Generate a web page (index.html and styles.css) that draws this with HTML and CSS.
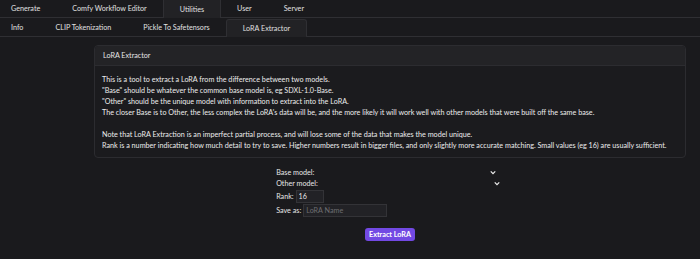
FILE: index.html
```html
<!DOCTYPE html>
<html lang="en">
<head>
<meta charset="utf-8">
<title>LoRA Extractor</title>
<link rel="stylesheet" href="styles.css">
</head>
<body>
<nav class="tabs tabs-main">
  <a class="tab">Generate</a>
  <a class="tab">Comfy Workflow Editor</a>
  <a class="tab active">Utilities</a>
  <a class="tab">User</a>
  <a class="tab">Server</a>
</nav>
<nav class="tabs tabs-sub">
  <a class="tab">Info</a>
  <a class="tab">CLIP Tokenization</a>
  <a class="tab">Pickle To Safetensors</a>
  <a class="tab active">LoRA Extractor</a>
</nav>
<main class="content">
  <section class="card">
    <div class="card-header">LoRA Extractor</div>
    <div class="card-body">
      This is a tool to extract a LoRA from the difference between two models.<br>
      "Base" should be whatever the common base model is, eg SDXL-1.0-Base.<br>
      "Other" should be the unique model with information to extract into the LoRA.<br>
      The closer Base is to Other, the less complex the LoRA's data will be, and the more likely it will work well with other models that were built off the same base.<br>
      <br>
      Note that LoRA Extraction is an imperfect partial process, and will lose some of the data that makes the model unique.<br>
      Rank is a number indicating how much detail to try to save. Higher numbers result in bigger files, and only slightly more accurate matching. Small values (eg 16) are usually sufficient.
    </div>
  </section>
  <div class="form-wrap">
    <div class="form">
      <div class="row"><span class="label">Base model:</span><span class="select"><svg viewBox="0 0 8 6" width="6" height="5"><path d="M1 1.5 L4 4.5 L7 1.5" fill="none" stroke="#eee" stroke-width="1.6"/></svg></span></div>
      <div class="row"><span class="label">Other model:</span><span class="select"><svg viewBox="0 0 8 6" width="6" height="5"><path d="M1 1.5 L4 4.5 L7 1.5" fill="none" stroke="#eee" stroke-width="1.6"/></svg></span></div>
      <div class="row row-input"><span class="label">Rank:</span><input class="input input-rank" type="text" value="16"></div>
      <div class="row row-input"><span class="label">Save as:</span><input class="input input-name" type="text" placeholder="LoRA Name"></div>
    </div>
    <button class="btn">Extract LoRA</button>
  </div>
</main>
</body>
</html>
```
FILE: styles.css
```css
* { box-sizing: border-box; }
html, body { margin: 0; padding: 0; }
body {
  background: #1a1a1d;
  color: #e6e6e6;
  font-family: Lato, "Liberation Sans", Arial, sans-serif;
  font-size: 7.2px;
  width: 700px;
  height: 259px;
  overflow: hidden;
}
.tabs {
  display: flex;
  align-items: stretch;
  border-bottom: 1px solid #2f2f33;
}
.tabs-main { height: 18px; }
.tabs-sub { height: 19px; padding-top: 1px; }
.tab {
  display: flex;
  align-items: center;
  padding: 0 16px;
  color: #e0e0e0;
  white-space: nowrap;
}
.tab:first-child { padding-left: 11px; }
.tab.active {
  background: #222225;
  border: 1px solid #2f2f33;
  border-bottom: none;
  border-radius: 3px 3px 0 0;
  margin-bottom: -1px;
}
.tabs-main .tab.active { border-top: none; border-radius: 0; }
.content { padding: 8px 14px 0 94px; }
.card {
  border: 1px solid #2c2c30;
  border-radius: 4px;
  background: #1b1b1e;
  overflow: hidden;
}
.card-header {
  height: 20px;
  display: flex;
  align-items: center;
  padding: 0 8px;
  background: #232326;
  border-bottom: 1px solid #2c2c30;
}
.card-body {
  padding: 8px 7px 6px 7px;
  line-height: 11px;
  color: #ececec;
  white-space: nowrap;
}
.form-wrap {
  display: flex;
  flex-direction: column;
  align-items: center;
  padding-top: 9px;
}
.form { display: flex; flex-direction: column; }
.row { display: flex; align-items: center; height: 11px; }
.row-input { height: 13px; margin-top: 1px; }
.label { margin-right: 2px; }
.select {
  width: 184px;
  display: flex;
  justify-content: flex-end;
  align-items: center;
  padding-right: 4px;
}
.input {
  height: 13px;
  background: #222226;
  border: 1px solid #333337;
  color: #e6e6e6;
  font: inherit;
  padding: 0 2px;
  outline: none;
}
.input::placeholder { color: #6e6e72; }
.input-rank { width: 28px; }
.input-name { width: 84px; }
.btn {
  margin-top: 11px;
  height: 13px;
  padding: 0 4px;
  background: #7249e3;
  color: #fff;
  border: none;
  border-radius: 3px;
  font: inherit;
  font-weight: bold;
}
```
